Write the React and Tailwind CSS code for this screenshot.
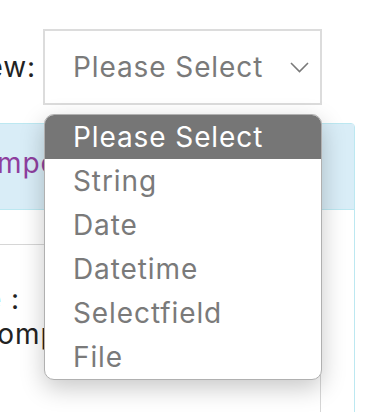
export default function App() {
    const options = ["Please Select", "String", "Date", "Datetime", "Selectfield", "File"];

    return (
        <div className="relative w-[365px] h-[412px] overflow-hidden bg-white font-['Inter',sans-serif] text-[28px] leading-none tracking-[0.9px]">
            <div className="flex items-center pt-[29px]">
                <div className="w-[36px] flex justify-end whitespace-nowrap text-[#222] mr-[7px]">View:</div>
                <div className="w-[279px] h-[76px] border-2 border-[#dcdcdc] flex items-center pl-[28px] pr-[11px] text-[#7a7a7a]">
                    <span>Please Select</span>
                    <svg className="ml-auto" width="19" height="11" viewBox="0 0 19 11" fill="none">
                        <polyline points="1,1 9.5,9.5 18,1" stroke="#7a7a7a" strokeWidth="1.6" />
                    </svg>
                </div>
            </div>

            <div className="mt-[18px] -ml-[100px] w-[455px] border border-[#bce8f1] rounded-[4px] bg-white">
                <div className="h-[86px] bg-[#d9edf7] border-b border-[#bce8f1] flex items-center pl-[57px] pb-[8px] text-[#8e3f9e] whitespace-nowrap">
                    Component Details
                </div>
                <div className="pt-[34px] pl-[10px]">
                    <div className="w-[410px] border-t border-r border-[#d6d6d6] h-[200px] pl-[10px] pt-[40px] whitespace-nowrap text-[#222]">
                        <div>
                            <span className="text-[#31b0d5]">Name</span> :
                        </div>
                        <div className="mt-[7px] ml-[55px]">Component</div>
                    </div>
                </div>
            </div>

            <div className="absolute left-[44px] top-[114px] w-[278px] rounded-[10px] border border-[#b0b0b0] bg-white overflow-hidden shadow-[0_8px_24px_rgba(0,0,0,0.22)]">
                {options.map((opt, i) => (
                    <div
                        key={opt}
                        className={
                            i === 0
                                ? "h-[44px] flex items-center pl-[28px] bg-[#767676] text-white"
                                : "h-[44px] flex items-center pl-[28px] text-[#7a7a7a]"
                        }
                    >
                        {opt}
                    </div>
                ))}
            </div>
        </div>
    );
}
